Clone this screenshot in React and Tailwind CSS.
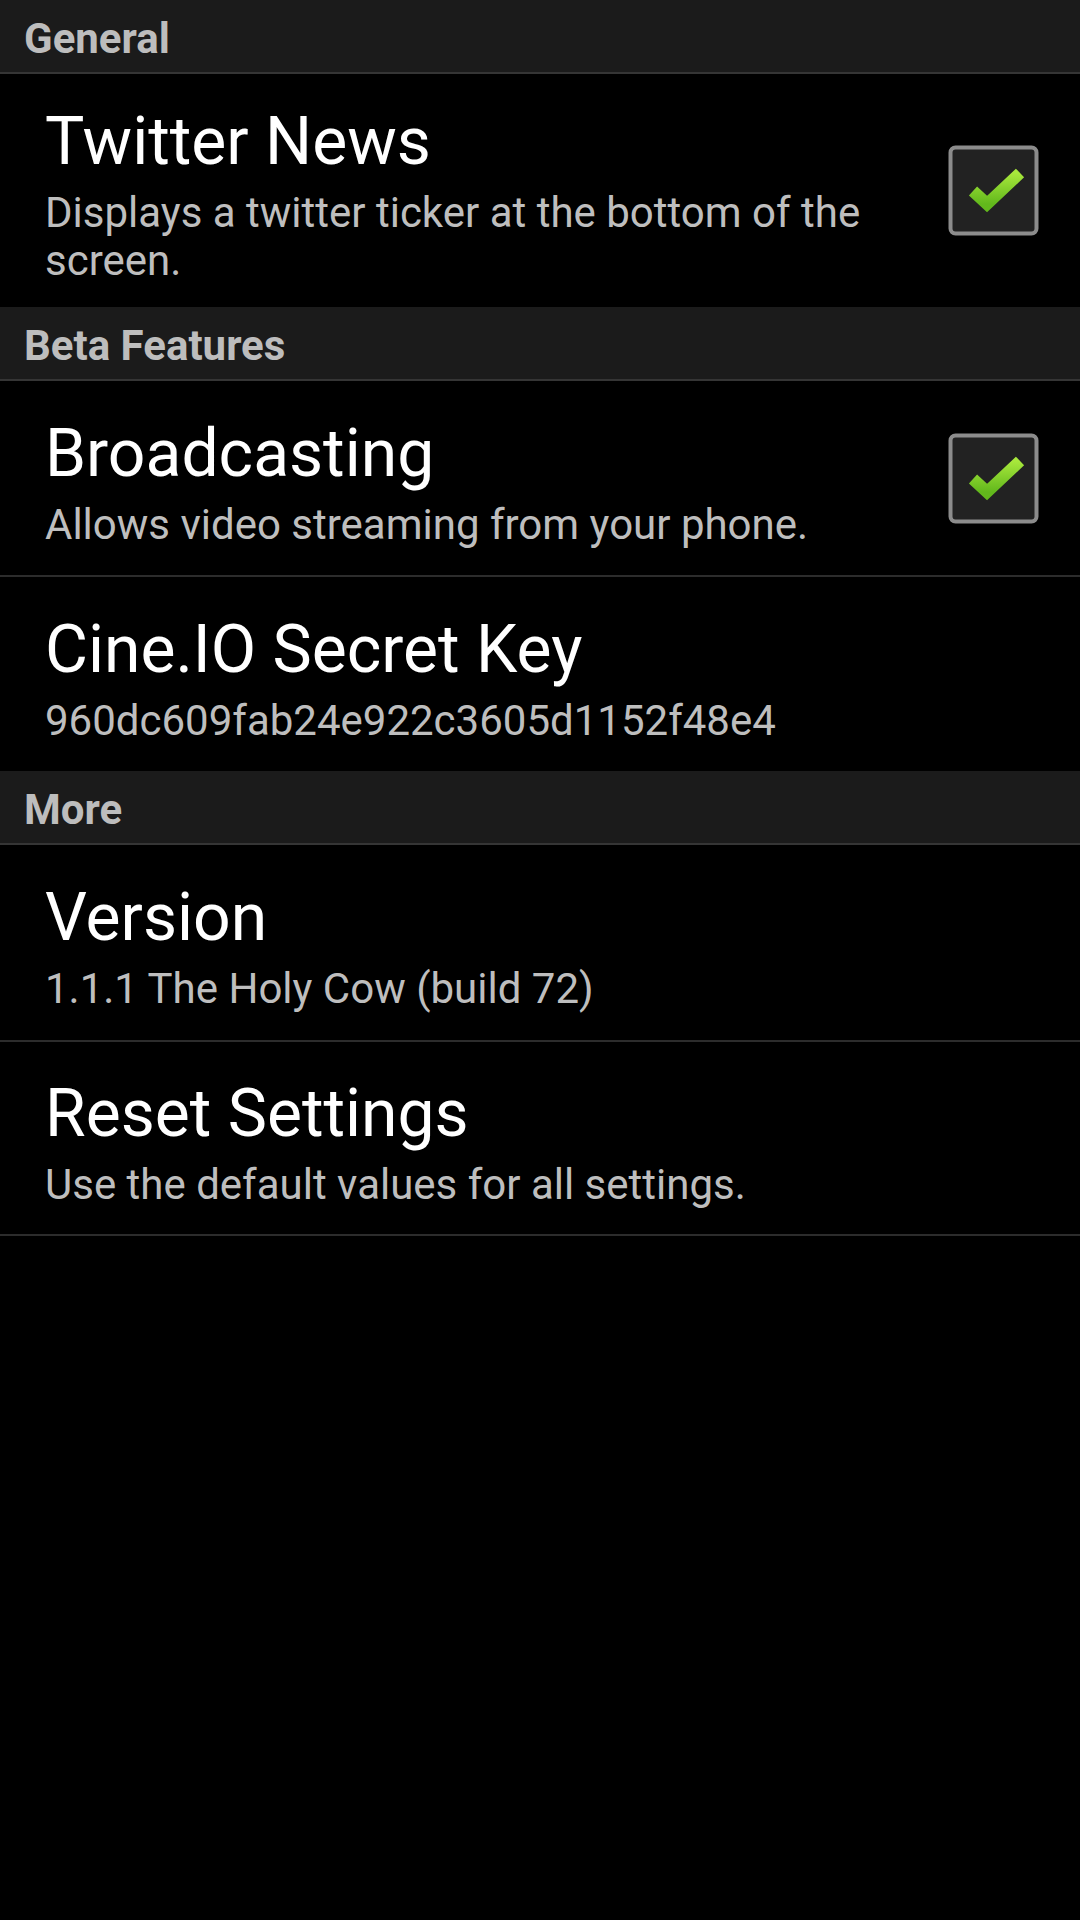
import React from "react";

function Check() {
  return (
    <svg width="91" height="91" viewBox="0 0 91 91" className="shrink-0">
      <defs>
        <linearGradient id="g" x1="0" y1="0" x2="0" y2="1">
          <stop offset="0" stopColor="#a8e83c" />
          <stop offset="1" stopColor="#62b81c" />
        </linearGradient>
      </defs>
      <rect x="2.5" y="2.5" width="86" height="86" rx="5" fill="#222222" stroke="#8c8c8c" strokeWidth="4" />
      <path d="M25 46 L39 59 L72 28" fill="none" stroke="url(#g)" strokeWidth="12" strokeLinejoin="miter" strokeLinecap="butt" />
    </svg>
  );
}

function Header({ children }) {
  return (
    <div className="h-[74px] bg-[#1b1b1b] border-b-2 border-[#353535] flex items-center pl-[24px] pt-[6px]">
      <span className="text-[42px] font-bold text-[#bdbdbd] leading-none">{children}</span>
    </div>
  );
}

function Row({ title, summary, checked, h, divider }) {
  return (
    <div
      className={
        "flex items-center pl-[45px] pr-[41px] " +
        (divider ? "border-b-2 border-[#2c2c2c] " : "") +
        h
      }
    >
      <div className="flex-1 flex flex-col pr-[30px] pt-[3px]">
        <div className="text-[66px] leading-[86px] text-white">{title}</div>
        <div className="mt-[4px] text-[42px] leading-[48px] text-[#bebebe]">{summary}</div>
      </div>
      {checked && <Check />}
    </div>
  );
}

export default function App() {
  return (
    <div
      className="w-[1080px] h-[1920px] bg-black overflow-hidden"
      style={{ fontFamily: "Roboto, 'Noto Sans', sans-serif" }}
    >
      <Header>General</Header>
      <Row
        title="Twitter News"
        summary="Displays a twitter ticker at the bottom of the screen."
        checked
        h="h-[233px]"
      />
      <Header>Beta Features</Header>
      <Row
        title="Broadcasting"
        summary="Allows video streaming from your phone."
        checked
        h="h-[196px]"
        divider
      />
      <Row title="Cine.IO Secret Key" summary="960dc609fab24e922c3605d1152f48e4" h="h-[194px]" />
      <Header>More</Header>
      <Row title="Version" summary="1.1.1 The Holy Cow (build 72)" h="h-[197px]" divider />
      <Row title="Reset Settings" summary="Use the default values for all settings." h="h-[194px]" divider />
    </div>
  );
}
